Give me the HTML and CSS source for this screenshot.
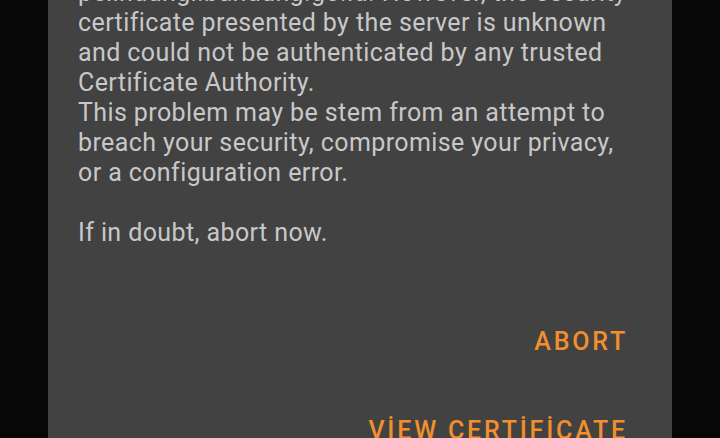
FILE: index.html
```html
<!DOCTYPE html>
<html lang="en">
<head>
    <meta charset="UTF-8">
    <meta name="viewport" content="width=device-width, initial-scale=1.0">
    <title>Certificate warning</title>
    <link rel="stylesheet" href="styles.css">
</head>

<body>
    <!-- 인증서 경고 대화상자 -->
    <div class="dialog">
        <p class="dialog-message">
            pelindungi.bandung.go.id. However, the security<br>
            certificate presented by the server is unknown<br>
            and could not be authenticated by any trusted<br>
            Certificate Authority.<br>
            This problem may be stem from an attempt to<br>
            breach your security, compromise your privacy,<br>
            or a configuration error.<br>
            <br>
            If in doubt, abort now.
        </p>

        <div class="dialog-actions">
            <button type="button" class="dialog-button">ABORT</button>
            <button type="button" class="dialog-button">VİEW CERTİFİCATE</button>
        </div>
    </div>
</body>
</html>
```

FILE: styles.css
```css
/* 전체 화면 */
body {
    margin: 0;
    background-color: #070707;
    font-family: Roboto, "Noto Sans", sans-serif;
    overflow: hidden;
}

/* 대화상자 */
.dialog {
    display: flow-root;
    margin: 0 48px;
    height: 438px;
    overflow: hidden;
    background-color: #424242;
}

.dialog-message {
    margin: -22px 0 0;
    padding: 0 30px 0 30px;
    font-size: 25px;
    line-height: 30px;
    letter-spacing: 0.4px;
    color: #c8c8c8;
}

/* 버튼 */
.dialog-actions {
    display: flex;
    flex-direction: column;
    align-items: flex-end;
    gap: 35px;
    margin-top: 66px;
    padding-right: 44px;
}

.dialog-button {
    height: 54px;
    padding: 0;
    border: none;
    background-color: transparent;
    color: #f28f2c;
    font-family: Roboto, "Noto Sans", sans-serif;
    font-size: 25px;
    font-weight: 500;
    letter-spacing: 2.8px;
    cursor: pointer;
}
```
